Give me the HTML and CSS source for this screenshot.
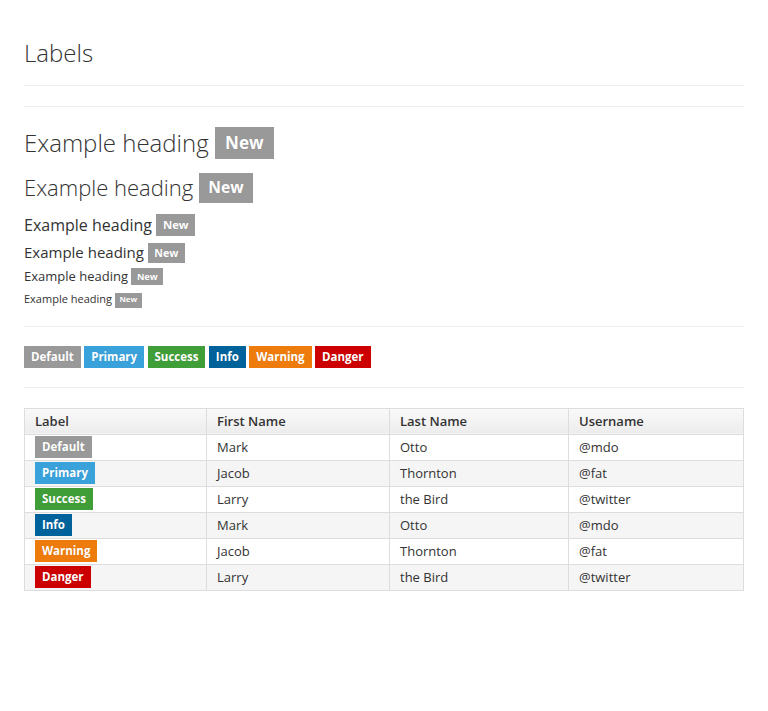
FILE: index.html
```html
<!DOCTYPE html>
<html>
<head>
<meta charset="utf-8">
<link rel="stylesheet" href="styles.css">
</head>
<body>
<div class="container">
  <div class="page-header"><h1 class="title">Labels</h1></div>
  <hr class="rule rule-top">
  <div class="headings">
    <div class="hd hd1">Example heading <span class="label label-default">New</span></div>
    <div class="hd hd2">Example heading <span class="label label-default">New</span></div>
    <div class="hd hd3">Example heading <span class="label label-default">New</span></div>
    <div class="hd hd4">Example heading <span class="label label-default">New</span></div>
    <div class="hd hd5">Example heading <span class="label label-default">New</span></div>
    <div class="hd hd6">Example heading <span class="label label-default">New</span></div>
  </div>
  <hr class="rule">
  <div class="label-row">
    <span class="label lbl label-default">Default</span>
    <span class="label lbl label-primary">Primary</span>
    <span class="label lbl label-success">Success</span>
    <span class="label lbl label-info">Info</span>
    <span class="label lbl label-warning">Warning</span>
    <span class="label lbl label-danger">Danger</span>
  </div>
  <hr class="rule">
  <table class="table">
    <colgroup>
      <col class="col-a"><col class="col-b"><col class="col-c"><col>
    </colgroup>
    <thead>
      <tr><th>Label</th><th>First Name</th><th>Last Name</th><th>Username</th></tr>
    </thead>
    <tbody>
      <tr><td><span class="label lbl label-default">Default</span></td><td>Mark</td><td>Otto</td><td>@mdo</td></tr>
      <tr><td><span class="label lbl label-primary">Primary</span></td><td>Jacob</td><td>Thornton</td><td>@fat</td></tr>
      <tr><td><span class="label lbl label-success">Success</span></td><td>Larry</td><td>the Bird</td><td>@twitter</td></tr>
      <tr><td><span class="label lbl label-info">Info</span></td><td>Mark</td><td>Otto</td><td>@mdo</td></tr>
      <tr><td><span class="label lbl label-warning">Warning</span></td><td>Jacob</td><td>Thornton</td><td>@fat</td></tr>
      <tr><td><span class="label lbl label-danger">Danger</span></td><td>Larry</td><td>the Bird</td><td>@twitter</td></tr>
    </tbody>
  </table>
</div>
</body>
</html>
```

FILE: styles.css
```css
html, body {
  margin: 0;
  padding: 0;
  background: #ffffff;
}
body {
  font-family: "Open Sans", "Liberation Sans", sans-serif;
  color: #333333;
  font-size: 13px;
}
.container {
  padding: 0 24px;
}
.page-header {
  padding: 40px 0 19px;
  border-bottom: 1px solid #eeeeee;
}
.title {
  margin: 0;
  font-size: 24px;
  font-weight: 300;
  line-height: 26px;
}
.rule {
  border: 0;
  border-top: 1px solid #eeeeee;
  margin: 0;
  height: 0;
}
.rule-top {
  margin-top: 20px;
}
.headings {
  padding: 19px 0 18px;
}
.hd {
  color: #333333;
  line-height: 1.4;
}
.hd1 { font-size: 24px; font-weight: 300; margin-bottom: 12px; }
.hd2 { font-size: 22px; font-weight: 300; margin-bottom: 11px; }
.hd3 { font-size: 16px; margin-bottom: 6px; }
.hd4 { font-size: 15px; margin-bottom: 4px; }
.hd5 { font-size: 13px; margin-bottom: 6px; }
.hd6 { font-size: 11px; }
.label {
  display: inline-block;
  font-weight: 700;
  color: #ffffff;
  font-size: 71%;
  line-height: 1;
  padding: 0.45em 0.6em 0.45em;
  vertical-align: 0.15em;
  text-shadow: 0 0 1px rgba(0, 0, 0, 0.12);
}
.lbl {
  font-size: 11.5px;
  line-height: 12px;
  padding: 5px 7px;
  vertical-align: top;
}
.label-default { background: #999999; }
.label-primary { background: #3aa2db; }
.label-success { background: #409e38; }
.label-info { background: #00629b; }
.label-warning { background: #ee7c0d; }
.label-danger { background: #cc0000; }
.label-row {
  padding: 19px 0 19px;
  line-height: 22px;
  height: 22px;
}
.table {
  margin-top: 20px;
  width: 100%;
  table-layout: fixed;
  border-collapse: collapse;
  border: 1px solid #dddddd;
}
.col-a { width: 182px; }
.col-b { width: 183px; }
.col-c { width: 179px; }
.table th, .table td {
  border: 1px solid #dddddd;
  text-align: left;
  padding: 1px 10px 2px;
  line-height: 22px;
  height: 22px;
  vertical-align: top;
  white-space: nowrap;
}
.table th {
  font-weight: 600;
  background: linear-gradient(#fafafa, #ececec);
}
.table tbody tr:nth-child(even) td {
  background: #f5f5f5;
}
```
